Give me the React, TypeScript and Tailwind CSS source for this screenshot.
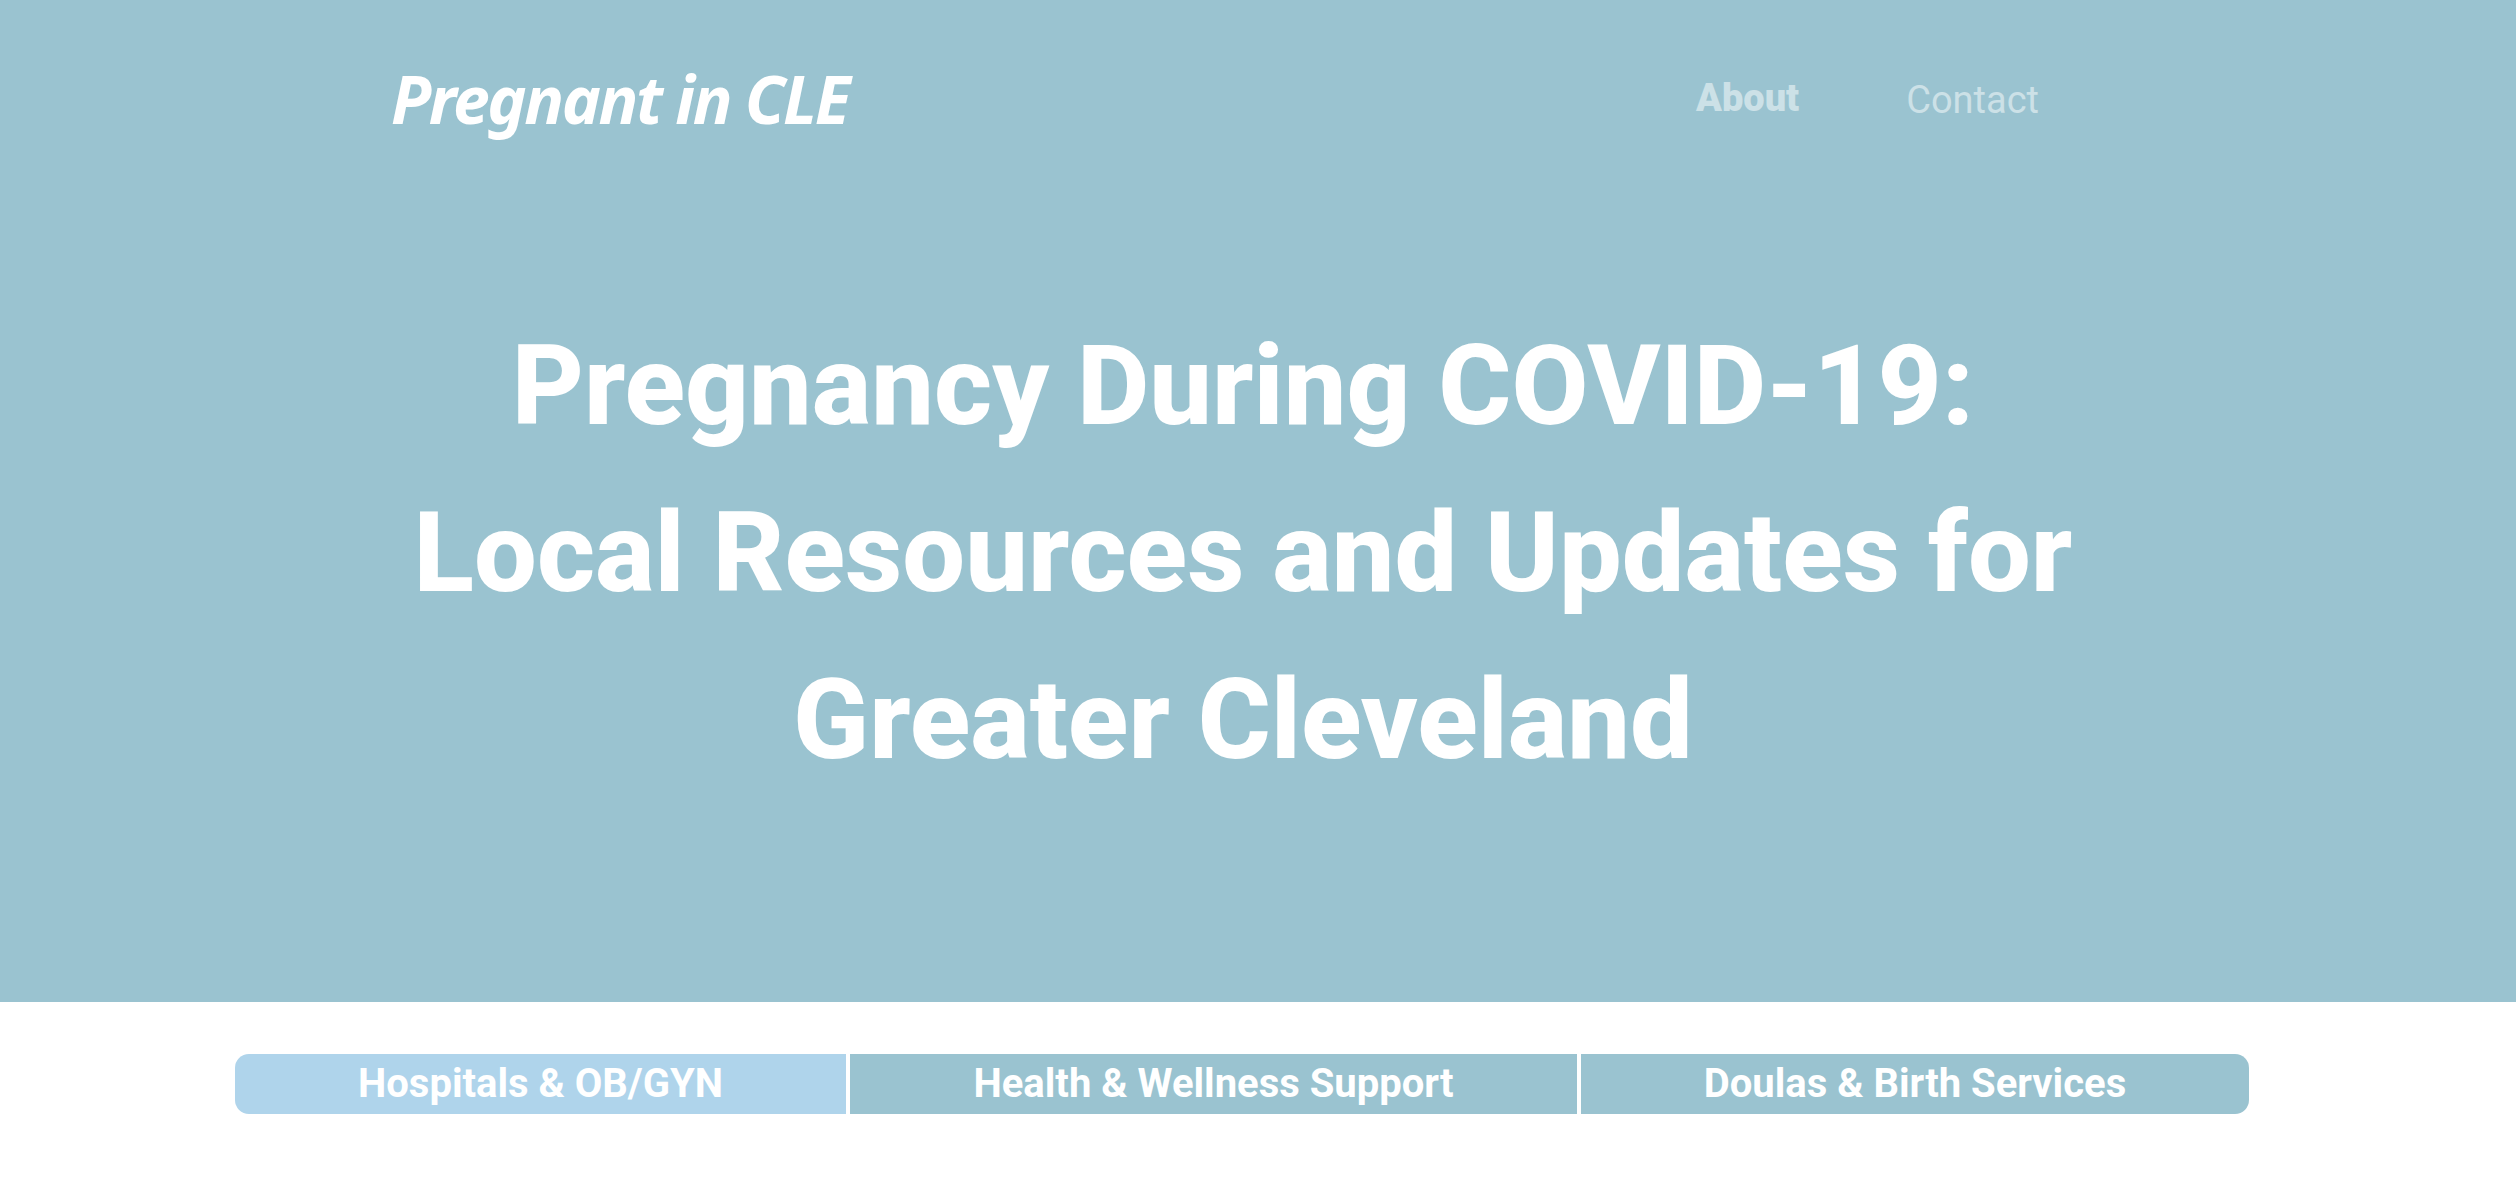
import React from 'react';

const tabs = [
  { label: 'Hospitals & OB/GYN', className: 'w-[611px] rounded-l-[14px] bg-[#afd4eb]' },
  { label: 'Health & Wellness Support', className: 'w-[727px] bg-[#9ac3d0]' },
  { label: 'Doulas & Birth Services', className: 'flex-1 rounded-r-[14px] bg-[#9ac3d0]' },
];

export default function App() {
  return (
    <div className="min-h-[1194px] bg-white font-['Roboto',sans-serif]">
      <header className="flex h-[1002px] flex-col bg-[#9ac3d0]">
        <nav className="flex items-start justify-between pl-[391px] pr-[477px] pt-[60px]">
          <a className="-mt-[2px] font-['Noto_Sans',sans-serif] text-[66px] font-bold italic leading-[80px] tracking-[-2.4px] text-white">
            Pregnant in CLE
          </a>
          <div className="flex items-start gap-[107px] pt-[12px] text-[38px] text-white/50">
            <a className="-mt-[2px] font-black">About</a>
            <a>Contact</a>
          </div>
        </nav>
        <h1 className="ml-[343px] mt-[164px] w-[1800px] text-center text-[111.6px] font-extrabold leading-[167px] text-white">
          Pregnancy During COVID-19:
          <br />
          Local Resources and Updates for
          <br />
          Greater Cleveland
        </h1>
      </header>
      <div className="mx-[235px] mt-[52px] flex h-[60px] w-[2014px] gap-1">
        {tabs.map((tab) => (
          <button
            key={tab.label}
            className={`flex items-center justify-center text-[40px] font-bold text-white ${tab.className}`}
          >
            {tab.label}
          </button>
        ))}
      </div>
    </div>
  );
}
